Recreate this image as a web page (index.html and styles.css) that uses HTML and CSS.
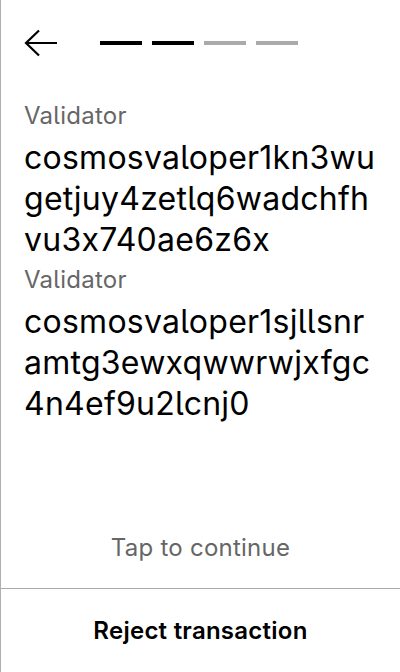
FILE: index.html
```html
<!DOCTYPE html>
<html>
<head>
<meta charset="utf-8">
<link rel="stylesheet" href="styles.css">
</head>
<body>
<div class="screen">
  <div class="header">
    <svg class="back" width="34" height="28" viewBox="0 0 34 28" aria-hidden="true">
      <path d="M15 1.5 L2 14 L15 26.5 M2 14 H33" fill="none" stroke="#000" stroke-width="2.2"/>
    </svg>
    <div class="steps">
      <span class="step done"></span>
      <span class="step done"></span>
      <span class="step"></span>
      <span class="step"></span>
    </div>
  </div>
  <div class="content">
    <div class="field">
      <div class="label">Validator</div>
      <div class="value">cosmosvaloper1kn3wu<br>getjuy4zetlq6wadchfh<br>vu3x740ae6z6x</div>
    </div>
    <div class="field">
      <div class="label">Validator</div>
      <div class="value">cosmosvaloper1sjllsnr<br>amtg3ewxqwwrwjxfgc<br>4n4ef9u2lcnj0</div>
    </div>
  </div>
  <div class="tap">Tap to continue</div>
  <div class="reject">Reject transaction</div>
</div>
</body>
</html>
```
FILE: styles.css
```css
html, body {
  margin: 0;
  padding: 0;
  background: #fff;
}
body {
  font-family: Inter, "Noto Sans", sans-serif;
  font-feature-settings: "calt" 0, "cv05" 1;
  letter-spacing: 0.25px;
  color: #000;
}
.screen {
  width: 400px;
  height: 672px;
  box-sizing: border-box;
  border-left: 1px solid #b0b0b0;
  display: flex;
  flex-direction: column;
}
.header {
  display: flex;
  align-items: center;
  padding: 29px 0 0 23px;
  height: 28px;
}
.back {
  display: block;
}
.steps {
  display: flex;
  gap: 10px;
  margin-left: 42px;
}
.step {
  display: block;
  width: 42px;
  height: 4px;
  background: #aaaaaa;
}
.step.done {
  background: #000;
}
.content {
  padding: 0 8px 0 23px;
  margin-top: 45px;
  flex: 1;
}
.label {
  font-size: 24px;
  line-height: 28px;
  color: #666;
}
.value {
  font-size: 32px;
  line-height: 41px;
  margin-top: 7px;
  margin-bottom: 6px;
}
.tap {
  text-align: center;
  font-size: 24px;
  line-height: 28px;
  color: #666;
  padding-bottom: 26px;
}
.reject {
  border-top: 1px solid #aaaaaa;
  height: 83px;
  display: flex;
  align-items: center;
  justify-content: center;
  font-size: 24px;
  font-weight: 600;
}
```
